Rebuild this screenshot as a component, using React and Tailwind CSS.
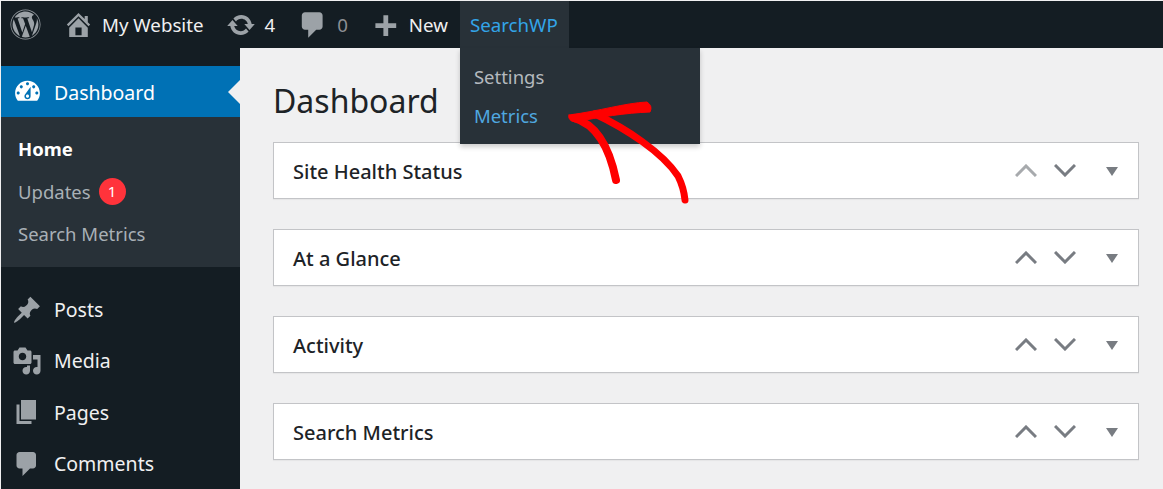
import { FaWordpress } from "react-icons/fa";

const paths = {
  home: "M16 8.5l1.53 1.53-1.06 1.06L10 4.62l-6.47 6.47-1.06-1.06L10 2.5l4 4v-2h2v4zm-6-2.46l6 5.99V18H4v-5.97zM12 17v-5H8v5h4z",
  update: "M10.2 3.28c3.53 0 6.43 2.61 6.92 6h2.08l-3.5 4-3.5-4h2.32c-.45-1.97-2.21-3.44-4.32-3.44-1.45 0-2.73.71-3.54 1.78L4.95 5.66C6.23 4.2 8.11 3.28 10.2 3.28zm-.4 13.44c-3.52 0-6.43-2.61-6.92-6H.8l3.5-4c1.17 1.33 2.33 2.67 3.5 4H5.48c.45 1.97 2.21 3.44 4.32 3.44 1.45 0 2.73-.71 3.54-1.78l1.71 1.95c-1.28 1.46-3.15 2.39-5.25 2.39z",
  comment: "M5 2h9c1.1 0 2 .9 2 2v7c0 1.1-.9 2-2 2h-2l-5 5v-5H5c-1.1 0-2-.9-2-2V4c0-1.1.9-2 2-2z",
  plus: "M17 7v3h-5v5H9v-5H4V7h5V2h3v5h5z",
  dashboard: "M3.76 16h12.48c1.1-1.37 1.76-3.11 1.76-5 0-4.42-3.58-8-8-8s-8 3.58-8 8c0 1.89.66 3.63 1.76 5zM10 4c.55 0 1 .45 1 1s-.45 1-1 1-1-.45-1-1 .45-1 1-1zM6 6c.55 0 1 .45 1 1s-.45 1-1 1-1-.45-1-1 .45-1 1-1zm8 0c.55 0 1 .45 1 1s-.45 1-1 1-1-.45-1-1 .45-1 1-1zm-5.37 5.55L12 7v6c0 1.1-.9 2-2 2s-2-.9-2-2c0-.57.24-1.08.63-1.45zM4 10c.55 0 1 .45 1 1s-.45 1-1 1-1-.45-1-1 .45-1 1-1zm12 0c.55 0 1 .45 1 1s-.45 1-1 1-1-.45-1-1 .45-1 1-1zm-5 3c0-.55-.45-1-1-1s-1 .45-1 1 .45 1 1 1 1-.45 1-1z",
  post: "M10.44 3.02l1.82-1.82 6.36 6.35-1.83 1.82c-1.05-.68-2.48-.57-3.41.36l-.75.75c-.92.93-1.04 2.35-.35 3.41l-1.83 1.82-2.41-2.41-2.8 2.79c-.42.42-3.38 2.71-3.8 2.29s1.86-3.39 2.28-3.81l2.79-2.79L4.1 9.36l1.83-1.82c1.05.69 2.48.57 3.4-.36l.75-.75c.93-.92 1.05-2.35.36-3.41z",
  media: "M13 11V4c0-.55-.45-1-1-1h-1.67L9 1H5L3.67 3H2c-.55 0-1 .45-1 1v7c0 .55.45 1 1 1h10c.55 0 1-.45 1-1zM7 4.5c1.38 0 2.5 1.12 2.5 2.5S8.38 9.5 7 9.5 4.5 8.38 4.5 7 5.62 4.5 7 4.5zM14 6h5v10.5c0 1.38-1.12 2.5-2.5 2.5S14 17.88 14 16.5s1.12-2.5 2.5-2.5c.17 0 .34.02.5.05V9h-3V6zm-4 8.05V13h2v3.5c0 1.38-1.12 2.5-2.5 2.5S7 17.88 7 16.5 8.12 14 9.5 14c.17 0 .34.02.5.05z",
  page: "M6 15V2h10v13H6zm-1 1h8v2H3V5h2v11z",
};

function Icon({ name, className }) {
  return (
    <svg viewBox="0 0 20 20" fill="currentColor" className={className}>
      <path d={paths[name]} />
    </svg>
  );
}

function BoxControls({ upDisabled }) {
  return (
    <div className="flex items-center">
      <svg viewBox="0 0 22 13" className="w-[22px] h-[13px]" fill="none" strokeWidth="3" stroke={upDisabled ? "#a7aaad" : "#787c82"}>
        <path d="M1 12 L11 2 L21 12" />
      </svg>
      <svg viewBox="0 0 22 13" className="w-[22px] h-[13px] ml-[17px]" fill="none" strokeWidth="3" stroke="#787c82">
        <path d="M1 1 L11 11 L21 1" />
      </svg>
      <svg viewBox="0 0 12 9" className="w-[12px] h-[9px] ml-[30px] mt-[2px]" fill="#787c82">
        <path d="M0 0 H12 L6 9 Z" />
      </svg>
    </div>
  );
}

function Box({ title, upDisabled }) {
  return (
    <div className="h-[57px] bg-white border border-[#c3c4c7] shadow-[0_1px_1px_rgba(0,0,0,0.04)] flex items-center justify-between pl-[19px] pr-[20px]">
      <h2 className="text-[20px] font-medium text-[#1d2327] leading-none pt-[2px]">{title}</h2>
      <BoxControls upDisabled={upDisabled} />
    </div>
  );
}

function SideItem({ icon, label }) {
  return (
    <div className="h-[51.3px] flex items-center pl-[11px] text-[19.5px] text-[#f0f0f1]">
      <Icon name={icon} className="w-[30px] h-[30px] text-[#9ca2a7] shrink-0" />
      <span className="ml-[12px]">{label}</span>
    </div>
  );
}

export default function App() {
  return (
    <div className="relative h-[489px] w-[1163px] overflow-hidden bg-[#f0f0f1] pt-px pl-px font-['Noto_Sans','Open_Sans',sans-serif]">
      {/* admin bar */}
      <div className="h-[47px] bg-[#141d23] flex items-center text-[18.7px] text-[#f0f0f1]">
        <FaWordpress className="ml-[9px] w-[31px] h-[31px] text-[#9ca2a7]" />
        <Icon name="home" className="ml-[22px] w-[31px] h-[31px] text-[#9ca2a7]" />
        <span className="ml-[8px] pt-[2px]">My Website</span>
        <Icon name="update" className="ml-[23px] w-[30px] h-[30px] text-[#9ca2a7]" />
        <span className="ml-[8px] pt-[2px]">4</span>
        <Icon name="comment" className="ml-[22px] w-[32px] h-[32px] text-[#9ca2a7]" />
        <span className="ml-[8px] pt-[2px] text-[#8c8f94]">0</span>
        <Icon name="plus" className="ml-[21px] w-[32px] h-[32px] mt-[6px] text-[#9ca2a7]" />
        <span className="ml-[8px] pt-[2px]">New</span>
        <div className="relative ml-[12px] h-full w-[109px] bg-[#283138] flex items-center pl-[10px] pt-[2px] text-[#33a5e8]">
          SearchWP
          <div className="absolute left-0 top-[47px] z-10 w-[240px] h-[96px] bg-[#283138] shadow-[0_3px_5px_rgba(0,0,0,0.2)] pl-[14px] pt-[14px] text-[18.5px]">
            <div className="leading-[30px] text-[#b4b9be]">Settings</div>
            <div className="mt-[9px] leading-[30px] text-[#4fa8e0]">Metrics</div>
          </div>
        </div>
      </div>

      <div className="flex">
        {/* sidebar */}
        <div className="w-[239px] h-[441px] shrink-0 bg-[#141d23] pt-[18px]">
          <div className="relative h-[51px] bg-[#0071b5] flex items-center pl-[11px] text-[19.5px] text-white">
            <Icon name="dashboard" className="w-[31px] h-[31px] shrink-0" />
            <span className="ml-[11px] pt-[2px]">Dashboard</span>
            <div className="absolute right-0 top-[14px] w-0 h-0 border-y-[12px] border-y-transparent border-r-[12px] border-r-[#f0f0f1]" />
          </div>
          <div className="h-[150px] bg-[#283138] pl-[17px] pt-[11px] text-[18.5px] text-[#a9b0b6]">
            <div className="h-[42px] flex items-center font-bold text-white">Home</div>
            <div className="h-[43px] flex items-center">
              Updates
              <span className="ml-[8px] w-[27px] h-[27px] rounded-full bg-[#ff333b] text-white text-[15px] flex items-center justify-center">1</span>
            </div>
            <div className="h-[42px] flex items-center">Search Metrics</div>
          </div>
          <div className="pt-[17px]">
            <SideItem icon="post" label="Posts" />
            <SideItem icon="media" label="Media" />
            <SideItem icon="page" label="Pages" />
            <SideItem icon="comment" label="Comments" />
          </div>
        </div>

        {/* content */}
        <div className="flex-1 pl-[33px] pr-[24px] pt-[28px]">
          <h1 className="text-[32px] leading-[50px] text-[#1d2327]">Dashboard</h1>
          <div className="mt-[16px] flex flex-col gap-[30px]">
            <Box title="Site Health Status" upDisabled />
            <Box title="At a Glance" />
            <Box title="Activity" />
            <Box title="Search Metrics" />
          </div>
        </div>
      </div>

      {/* hand drawn arrow */}
      <svg className="absolute left-0 top-0 z-20 pointer-events-none" width="1163" height="489" fill="none" stroke="#ff0000" strokeLinecap="round" strokeLinejoin="round">
        <path d="M569 115 C600 111 625 103 647 102 Q653 106 650 112 C625 113 600 117 575 122 Q567 120 569 115 Z" fill="#ff0000" strokeWidth="1" />
        <path d="M574 118 C595 124 609 145 616 180" strokeWidth="8" />
        <path d="M595 114 C625 128 662 152 678 176 C682 184 684 190 685 200" strokeWidth="7" />
      </svg>
    </div>
  );
}
